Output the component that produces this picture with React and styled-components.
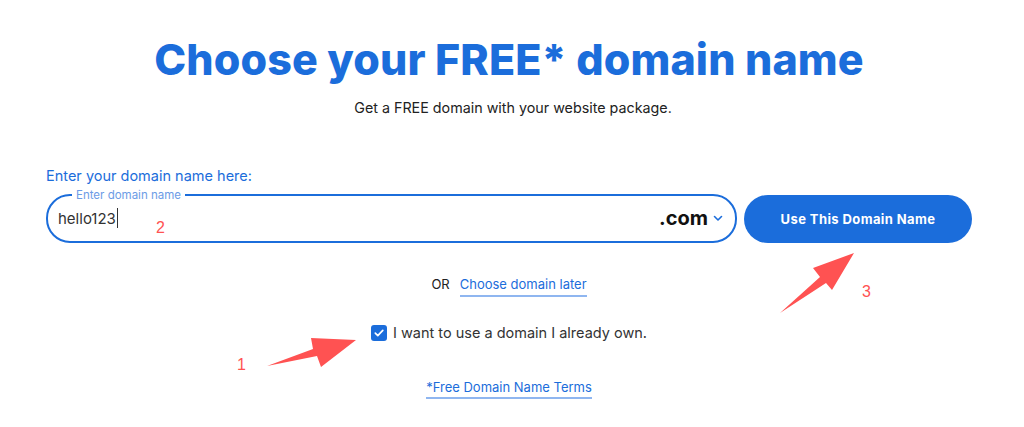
import React from "react";
import styled, { createGlobalStyle } from "styled-components";

const Global = createGlobalStyle`
  html, body { margin: 0; padding: 0; background: #fff; }
  body { font-family: Inter, "Noto Sans", sans-serif; color: #222; }
`;

const BLUE = "#1b6ddb";
const RED = "#ff5252";

const Page = styled.div`
  position: relative;
  width: 1024px;
  height: 427px;
  overflow: hidden;
  box-sizing: border-box;
  padding: 29px 52px 0 46px;
  display: flex;
  flex-direction: column;
`;

const Title = styled.h1`
  margin: 0;
  text-align: center;
  font-size: 43px;
  line-height: 60px;
  font-weight: 800;
  color: ${BLUE};
  letter-spacing: 0.1px;
`;

const Subtitle = styled.p`
  margin: 7px 0 0;
  padding-left: 8px;
  text-align: center;
  font-size: 14.3px;
  line-height: 24px;
  color: #222;
`;

const FieldLabel = styled.div`
  margin-top: 46px;
  font-size: 14.5px;
  line-height: 20px;
  color: ${BLUE};
`;

const Row = styled.div`
  margin-top: 9px;
  display: flex;
  gap: 7px;
  align-items: stretch;
`;

const Field = styled.fieldset`
  position: relative;
  flex: 0 0 691px;
  box-sizing: border-box;
  height: 54px;
  margin: -6px 0 0;
  padding: 0 12px 0 10px;
  border: 2px solid ${BLUE};
  border-radius: 24px;
  display: flex;
  align-items: center;
  min-width: 0;
`;

const Legend = styled.legend`
  margin-left: 14px;
  padding: 0 4px;
  font-size: 11.5px;
  line-height: 12px;
  color: #6c9ce6;
`;

const Value = styled.span`
  font-size: 15px;
  color: #333;
  display: flex;
  align-items: center;
  margin-top: -6px;
`;

const Caret = styled.span`
  display: inline-block;
  width: 1px;
  height: 20px;
  background: #333;
  margin-left: 1px;
`;

const Tld = styled.div`
  margin-left: auto;
  display: flex;
  align-items: center;
  gap: 5px;
  margin-top: -6px;
  font-size: 20px;
  font-weight: 700;
  color: #111;
`;

const Button = styled.button`
  flex: 0 0 228px;
  height: 48px;
  border: none;
  border-radius: 24px;
  background: ${BLUE};
  color: #fff;
  font-family: Inter, sans-serif;
  font-weight: 700;
  font-size: 13px;
  letter-spacing: 0.4px;
`;

const OrLine = styled.div`
  margin-top: 31px;
  display: flex;
  justify-content: center;
  gap: 10px;
  font-size: 13px;
  line-height: 20px;
`;

const Link = styled.a`
  color: ${BLUE};
  text-decoration: none;
  border-bottom: 2px solid #8fb6f0;
  padding-bottom: 1px;
`;

const CheckLine = styled.label`
  margin-top: 26px;
  display: flex;
  align-items: center;
  justify-content: center;
  gap: 6px;
  font-size: 14.5px;
  line-height: 20px;
  color: #333;
`;

const Box = styled.span`
  width: 16px;
  height: 16px;
  border-radius: 3px;
  background: ${BLUE};
  display: inline-flex;
  align-items: center;
  justify-content: center;
`;

const Terms = styled.div`
  margin-top: 35px;
  display: flex;
  justify-content: center;
  font-size: 13px;
  line-height: 18px;
`;

const Overlay = styled.svg`
  position: absolute;
  left: 0;
  top: 0;
  pointer-events: none;
`;

const Num = styled.span`
  position: absolute;
  left: ${(p) => p.x}px;
  top: ${(p) => p.y}px;
  color: ${RED};
  font-size: 16px;
  line-height: 18px;
  font-family: "Liberation Sans", sans-serif;
`;

export default function App() {
  return (
    <>
      <Global />
      <Page>
        <Title>Choose your FREE* domain name</Title>
        <Subtitle>Get a FREE domain with your website package.</Subtitle>
        <FieldLabel>Enter your domain name here:</FieldLabel>
        <Row>
          <Field>
            <Legend>Enter domain name</Legend>
            <Value>
              hello123
              <Caret />
            </Value>
            <Tld>
              .com
              <svg width="10" height="7" viewBox="0 0 10 7">
                <path d="M1.5 1.5 L5 5 L8.5 1.5" fill="none" stroke={BLUE} strokeWidth="1.6" strokeLinecap="round" strokeLinejoin="round" />
              </svg>
            </Tld>
          </Field>
          <Button>Use This Domain Name</Button>
        </Row>
        <OrLine>
          <span>OR</span>
          <Link>Choose domain later</Link>
        </OrLine>
        <CheckLine>
          <Box>
            <svg width="12" height="12" viewBox="0 0 12 12">
              <path d="M2.3 6.2 L4.8 8.6 L9.8 3.4" fill="none" stroke="#fff" strokeWidth="1.7" strokeLinecap="round" strokeLinejoin="round" />
            </svg>
          </Box>
          I want to use a domain I already own.
        </CheckLine>
        <Terms>
          <Link>*Free Domain Name Terms</Link>
        </Terms>
        <Overlay width="1024" height="427" viewBox="0 0 1024 427">
          <polygon points="267,366 313,349 311,338 356,340 321,367 317,356" fill={RED} />
          <polygon points="780,313 820,277 813,268 854,253 832,290 826,283" fill={RED} />
        </Overlay>
        <Num x={237} y={356}>1</Num>
        <Num x={156} y={219}>2</Num>
        <Num x={862} y={283}>3</Num>
      </Page>
    </>
  );
}
